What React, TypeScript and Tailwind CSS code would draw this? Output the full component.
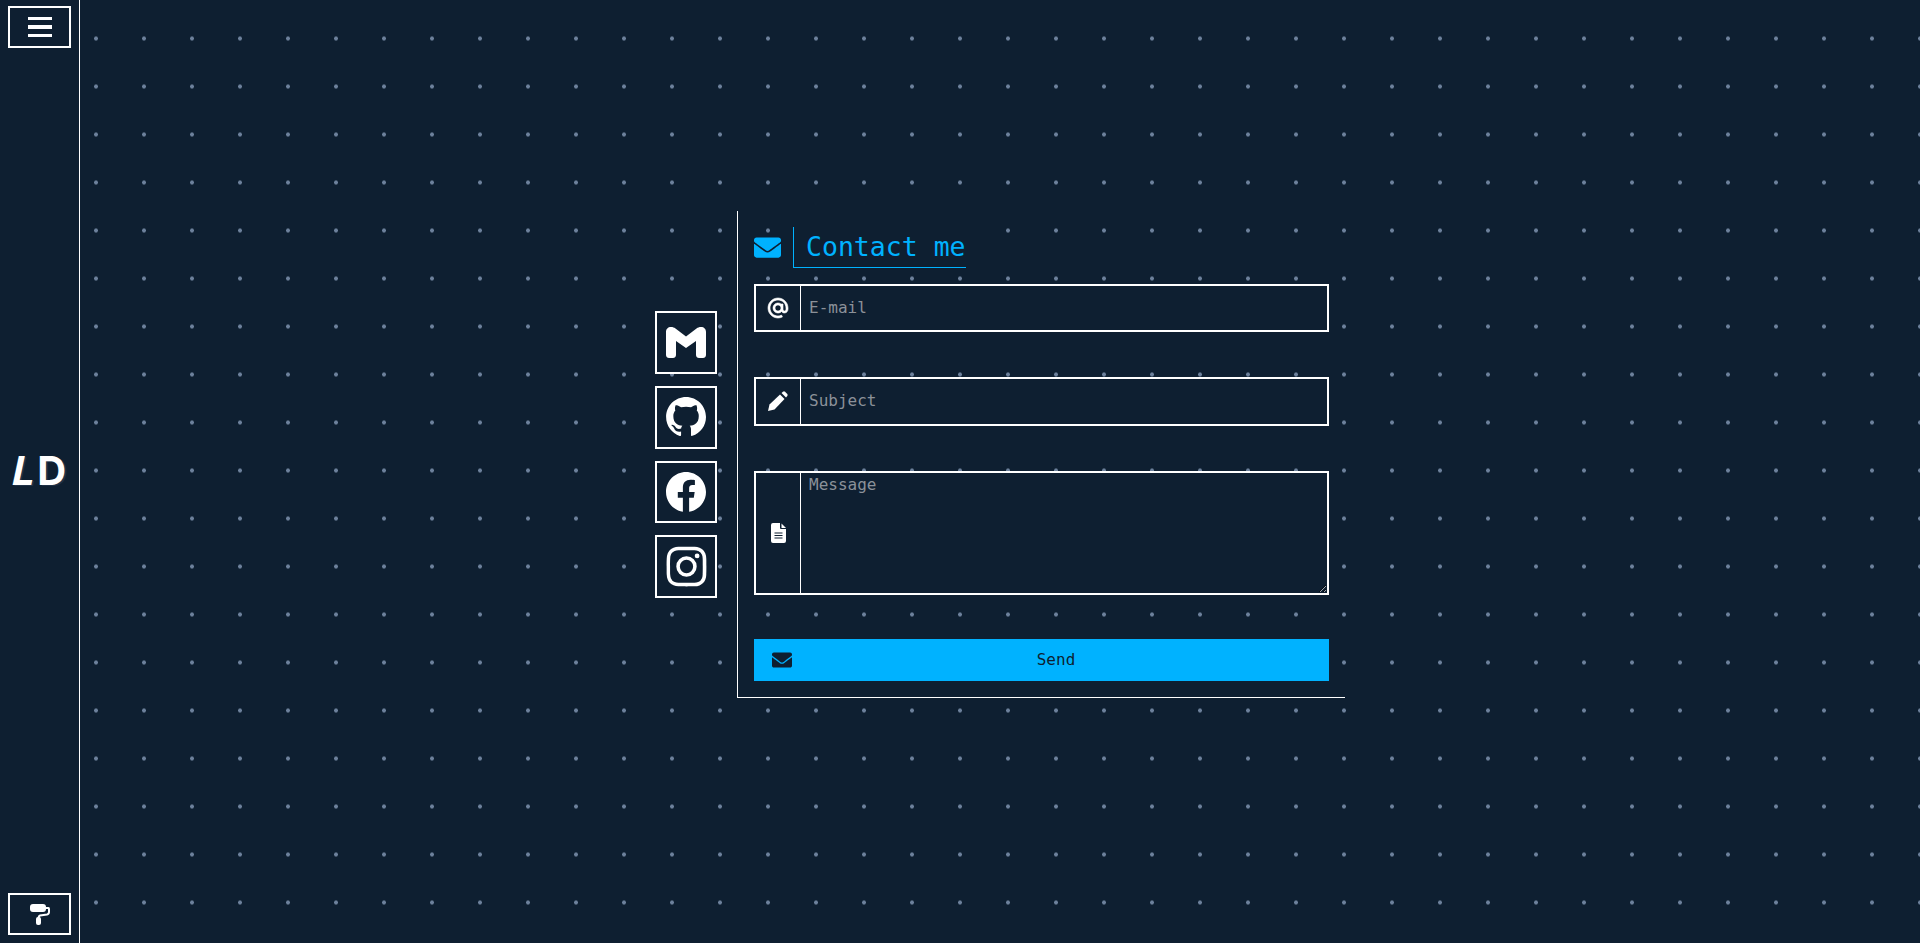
import { BiAt, BiLogoFacebookCircle, BiLogoGithub, BiLogoInstagram } from "react-icons/bi";
import { FaEnvelope } from "react-icons/fa";

const mono = "font-['DejaVu_Sans_Mono',monospace]";

function SideButton({ children }: { children: React.ReactNode }) {
  return (
    <button className="flex h-[42px] w-[63px] items-center justify-center border-2 border-white text-white">
      {children}
    </button>
  );
}

function Social({ children }: { children: React.ReactNode }) {
  return (
    <a className="flex h-[62.67px] w-[62px] items-center justify-center border-2 border-white bg-[#0e1f31] text-white">
      {children}
    </a>
  );
}

function Field({ icon, placeholder, height }: { icon: React.ReactNode; placeholder: string; height: string }) {
  return (
    <div className={`flex border-2 border-white bg-[#0e1f31] ${height}`}>
      <div className="flex w-[45px] shrink-0 items-center justify-center border-r border-white text-white">
        {icon}
      </div>
      <input
        placeholder={placeholder}
        className="min-w-0 flex-1 bg-transparent px-2 text-base text-white outline-none placeholder:text-[#8b9199]"
      />
    </div>
  );
}

function GmailIcon() {
  return (
    <svg width="40" height="31" viewBox="0 0 40 31" fill="currentColor">
      <path d="M5 0C7 0 8 .5 9.5 1.500L20 9.500l10.500-8C32 .5 33 0 35 0c3 0 5 2 5 5v23c0 2-1.500 3-3 3h-4c-1.500 0-3-1-3-3V14l-10 7-10-7v14c0 2-1.500 3-3 3H3c-1.500 0-3-1-3-3V5c0-3 2-5 5-5z" />
    </svg>
  );
}

function RollerIcon() {
  return (
    <svg width="24" height="24" viewBox="0 0 24 24" fill="white">
      <rect x="2" y="2" width="16" height="8" rx="3" />
      <path d="M18 6h2.500q.500 0 .500 1v3q0 2-2 2.500l-7 1q-1.500.500-1.500 2.500" fill="none" stroke="white" strokeWidth="2" />
      <rect x="8" y="15" width="5" height="8" rx="2" />
    </svg>
  );
}

function DocIcon() {
  return (
    <svg width="15" height="20" viewBox="0 0 15 20">
      <path d="M2 0h7v5a1 1 0 0 0 1 1h5v12a2 2 0 0 1-2 2H2a2 2 0 0 1-2-2V2a2 2 0 0 1 2-2z" fill="white" />
      <path d="M10.500.500 15 5h-4.500z" fill="white" />
      <path d="M3.500 10h8M3.500 12.500h8M3.500 15h8" stroke="#0e1f31" strokeWidth="1.200" />
    </svg>
  );
}

function PencilIcon() {
  return (
    <svg width="20" height="20" viewBox="0 0 20 20" fill="white">
      <path d="M0 20 1.500 13.500 12 3.500 16.500 8 6.500 18.500z" />
      <path d="M13.500 2 15 .7q1-.7 2 0L19.300 3q.7 1 0 2L18 6.500z" />
    </svg>
  );
}

export default function App() {
  return (
    <div
      className={`flex h-[943px] w-full overflow-hidden bg-[#0e1f31] bg-[radial-gradient(circle,#6d819c_1.6px,transparent_2.3px)] bg-[size:48px_48px] bg-[position:24px_14.5px] ${mono}`}
    >
      <aside className="flex h-full w-20 shrink-0 flex-col items-start justify-between border-r border-white bg-[#0e1f31] pt-1.5 pb-2 pl-2">
        <SideButton>
          <span className="flex w-6 flex-col gap-[5px]">
            <span className="h-[3px] bg-white" />
            <span className="h-1 bg-white" />
            <span className="h-[3px] bg-white" />
          </span>
        </SideButton>
        <div className="w-[63px] text-center font-['Inter',sans-serif] text-[40px] leading-none font-bold whitespace-nowrap text-white [text-shadow:2px_1px_0_#1f3147]">
          <span className="inline-block -skew-x-12 pr-[2px]">L</span>D
        </div>
        <SideButton>
          <RollerIcon />
        </SideButton>
      </aside>

      <main className="flex flex-1 items-center justify-center pb-[34px]">
        <div className="mr-5 flex flex-col gap-3">
          <Social><GmailIcon /></Social>
          <Social><BiLogoGithub size={48} /></Social>
          <Social><BiLogoFacebookCircle size={48} /></Social>
          <Social><BiLogoInstagram size={53} /></Social>
        </div>

        <section className="h-[487px] w-[608px] border-b border-l border-white px-4 pt-4">
          <div className="mb-4 flex items-center">
            <div className="w-[39px] text-[#00b2ff]">
              <FaEnvelope size={27} />
            </div>
            <h2 className="flex h-[41px] items-center border-b border-l border-[#00b2ff] bg-[#0e1f31] pl-3 text-[26.5px] text-[#00b2ff]">
              Contact me
            </h2>
          </div>

          <form className="w-[575px]">
            <Field height="h-12" icon={<BiAt size={24} stroke="currentColor" strokeWidth={0.6} />} placeholder="E-mail" />
            <div className="mt-[45px]">
              <Field height="h-[48.5px]" icon={<PencilIcon />} placeholder="Subject" />
            </div>
            <div className="mt-[45.5px] flex h-[124px] border-2 border-white bg-[#0e1f31]">
              <div className="flex w-[45px] shrink-0 items-center justify-center border-r border-white text-white">
                <DocIcon />
              </div>
              <textarea
                placeholder="Message"
                className="min-w-0 flex-1 bg-transparent px-2 text-base text-white outline-none placeholder:text-[#8b9199]"
              />
            </div>
            <button className="mt-11 flex h-[42px] w-full items-center bg-[#00b2ff] pl-[18px] text-[#0e1f31]">
              <FaEnvelope size={20} />
              <span className="flex-1 pr-[9px] text-center text-base">Send</span>
            </button>
          </form>
        </section>
      </main>
    </div>
  );
}
